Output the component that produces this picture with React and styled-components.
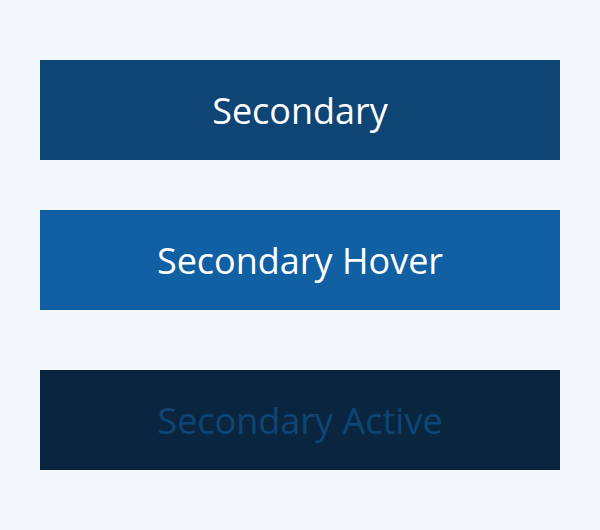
import React from "react";
import styled, { createGlobalStyle } from "styled-components";

const GlobalStyle = createGlobalStyle`
  html, body {
    margin: 0;
    padding: 0;
    background: #f3f7fe;
  }
`;

export default function App() {
  return (
    <>
      <GlobalStyle />
      <Page>
        <Button>Secondary</Button>
        <Button variant="hover">Secondary Hover</Button>
        <Button variant="active">Secondary Active</Button>
      </Page>
    </>
  );
}

const colors = {
  base: { bg: "#0f4574", fg: "#ffffff" },
  hover: { bg: "#1160a4", fg: "#ffffff" },
  active: { bg: "#0a253f", fg: "#0f4574" },
};

const Page = styled.div`
  width: 600px;
  height: 530px;
  box-sizing: border-box;
  padding: 60px 40px 0;
  display: flex;
  flex-direction: column;
  background: #f3f7fe;
`;

const Button = styled.div`
  height: 100px;
  display: flex;
  align-items: center;
  justify-content: center;
  margin-bottom: 50px;
  margin-top: ${(p) => (p.variant === "active" ? "10px" : "0")};
  background: ${(p) => colors[p.variant || "base"].bg};
  color: ${(p) => colors[p.variant || "base"].fg};
  font-family: "Open Sans", "Noto Sans", sans-serif;
  font-size: 36px;
`;
